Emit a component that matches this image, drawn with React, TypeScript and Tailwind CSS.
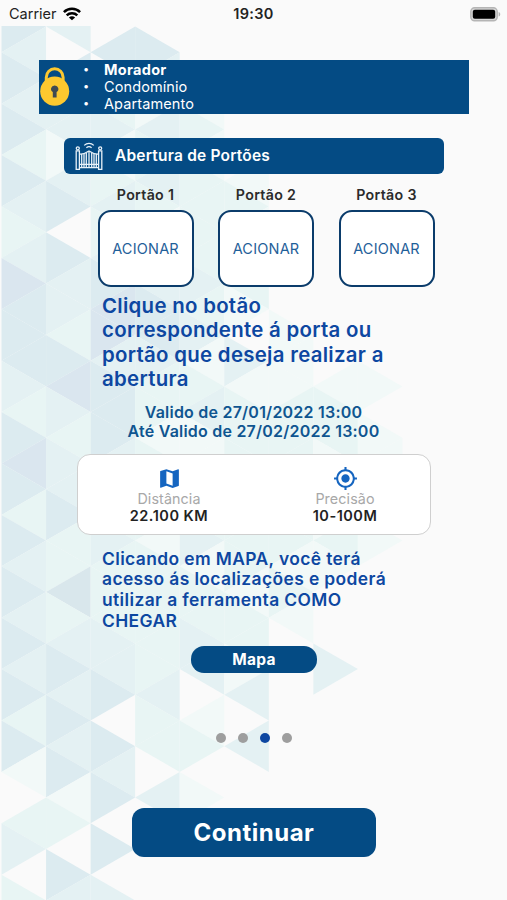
import { MdMap, MdMyLocation } from 'react-icons/md';

const COL_WIDTH = 44.55;
const HALF_ROW = 25.7;

const SHADES: Record<string, string> = {
  a: '#f2f9f8',
  b: '#e8f5f4',
  c: '#e4f1f3',
  d: '#dcebf0',
  e: '#d9e7ec',
  f: '#dae6ef',
};

// One string per column, one letter per triangle from top to bottom
const MOSAIC = [
  '.dcdcdbdcbcfdddcbdfdbdcdcdcdbda.bc.b',
  '.c.dccacd.dccbdfcbccdbbebcdcdcdab.dc',
  '..d.bcabcbcdffcdddcbbcbbbccd.dcd.d.c',
  '..dcacbcbaccddcbbabbbabbbbbcbb.c....',
  '....ababbbbcbcabcaabbcabbcc.ab.a....',
  '.......ababba.cabbbabbbabbac.c......',
  '.............aaabbbabbaba...........',
  '...............abbababa...c.........',
  '...............a.aa..a..............',
];

const gates = ['Portão 1', 'Portão 2', 'Portão 3'];
const pages = [0, 1, 2, 3];

function Background() {
  return (
    <svg className="absolute inset-0" width="507" height="900" viewBox="0 0 507 900">
      <defs>
        <clipPath id="below-status">
          <rect x="0" y="26" width="507" height="874" />
        </clipPath>
      </defs>
      <g clipPath="url(#below-status)">
        {MOSAIC.map((col, c) =>
          col.split('').map((shade, j) => {
            if (shade === '.') return null;
            const left = 1.5 + c * COL_WIDTH;
            const right = left + COL_WIDTH;
            const y = 0.9 + j * HALF_ROW;
            const pointsLeft = (c + j) % 2 === 0;
            const tip = pointsLeft ? left : right;
            const edge = pointsLeft ? right : left;
            return (
              <polygon
                key={`${c}-${j}`}
                points={`${tip},${y} ${edge},${y - HALF_ROW} ${edge},${y + HALF_ROW}`}
                fill={SHADES[shade]}
              />
            );
          })
        )}
      </g>
    </svg>
  );
}

function WifiIcon() {
  return (
    <svg width="18" height="14" viewBox="0 0 18 14" fill="none" stroke="#000" strokeWidth="2.5">
      <path d="M0.9 5.1C5.4 0.6 12.6 0.6 17.1 5.1" />
      <path d="M3.7 8.4C6.6 5.6 11.4 5.6 14.3 8.4" />
      <path d="M9 13.3L5.9 10.4C7.6 8.9 10.4 8.9 12.1 10.4Z" fill="#000" stroke="none" />
    </svg>
  );
}

function BatteryIcon() {
  return (
    <svg width="31" height="15" viewBox="0 0 31 15">
      <rect x="0.8" y="0.8" width="26.4" height="13" rx="3.8" fill="#d6d6d6" stroke="#b5b5b5" strokeWidth="1.4" />
      <rect x="2.8" y="2.8" width="22.4" height="9" rx="2" fill="#000" />
      <path d="M28.6 5C30.8 5.6 30.8 9 28.6 9.6Z" fill="#b5b5b5" />
    </svg>
  );
}

function LockIcon() {
  return (
    <svg width="31" height="40" viewBox="-0.7 0 31 40">
      <path d="M6.6 14V10.2a8.4 8.4 0 0 1 16.8 0V14" fill="none" stroke="#fdc82f" strokeWidth="3" />
      <ellipse cx="15" cy="24.2" rx="14.5" ry="14.6" fill="#fdc82f" />
      <path d="M15 18.4a3.6 3.6 0 0 1 1.9 6.7V30.6h-3.8v-5.5A3.6 3.6 0 0 1 15 18.4Z" fill="#404a52" />
    </svg>
  );
}

function GateIcon() {
  return (
    <svg width="28" height="29" viewBox="0 0 28 29" fill="none" stroke="#e8f1f8" strokeWidth="1.3">
      <path d="M9.2 3.4C12 0.7 16 0.7 18.8 3.4M11.4 5.8C13 4.3 15 4.3 16.6 5.8" />
      <circle cx="2.8" cy="6.3" r="1.5" />
      <circle cx="25.2" cy="6.3" r="1.5" />
      <path d="M1.2 8.8H4.4V27.4H1.2ZM23.6 8.8H26.8V27.4H23.6Z" />
      <path d="M4.4 12C8.5 12.5 10.5 11.4 14 9C17.5 11.4 19.5 12.5 23.6 12M4.4 22.3H23.6M4.4 25.6H23.6" />
      <path d="M6.7 12V25.6M9 12V25.6M11.3 11V25.6M14 9V25.6M16.7 11V25.6M19 12V25.6M21.3 12V25.6" />
    </svg>
  );
}

function StatusBar() {
  return (
    <div className="grid h-[26px] grid-cols-3 items-center pt-0.5 text-[14.5px] text-[#222]">
      <div className="flex items-center gap-[6px] pl-[9px]">
        <span>Carrier</span>
        <WifiIcon />
      </div>
      <span className="text-center font-semibold tracking-[0.3px]">19:30</span>
      <div className="flex justify-end pr-[6px]">
        <BatteryIcon />
      </div>
    </div>
  );
}

function Bullet() {
  return <span className="w-[21px] text-[11px]">•</span>;
}

function Metric({ icon, label, value }: { icon: React.ReactNode; label: string; value: string }) {
  return (
    <div className="flex w-[176px] shrink-0 flex-col items-center">
      <div className="h-[24px] text-[#1565c0]">{icon}</div>
      <span className="text-[14.3px] leading-[17px] tracking-[0.1px] text-[#a8a8a8]">{label}</span>
      <span className="text-[14.5px] font-semibold leading-[17px] tracking-[0.5px] text-[#222]">{value}</span>
    </div>
  );
}

export default function App() {
  return (
    <div className="relative h-[900px] w-[507px] overflow-hidden bg-[#fafafa] font-['Inter',sans-serif]">
      <Background />
      <div className="relative flex flex-col">
        <StatusBar />

        <header className="ml-[39px] mt-[33.5px] flex h-[54px] w-[430px] items-center bg-[#044b84] text-white">
          <LockIcon />
          <ul className="ml-[13px] text-[14.5px] leading-[17px] tracking-[0.1px]">
            <li className="flex"><Bullet /><b className="tracking-[0.3px]">Morador</b></li>
            <li className="flex"><Bullet />Condomínio</li>
            <li className="flex"><Bullet />Apartamento</li>
          </ul>
        </header>

        <div className="ml-[64px] mt-[24.5px] flex h-[36px] w-[380px] items-center gap-[12px] rounded-[6px] bg-[#044b84] pl-[11px] text-white">
          <GateIcon />
          <h1 className="text-[15.5px] font-semibold tracking-[0.2px]">Abertura de Portões</h1>
        </div>

        <div className="ml-[97.5px] mt-[12px] flex gap-[24.5px]">
          {gates.map((gate) => (
            <div key={gate} className="flex w-[96px] flex-col items-center">
              <span className="text-[14.2px] font-semibold leading-[18px] tracking-[0.3px] text-[#2b2b2b]">{gate}</span>
              <button className="mt-[6px] h-[77px] w-[96px] rounded-[13px] border-2 border-[#0b3c6b] bg-white text-[14.5px] tracking-[0.2px] text-[#1f6099]">
                ACIONAR
              </button>
            </div>
          ))}
        </div>

        <p className="ml-[102px] mt-[7px] w-[300px] text-[20.4px] font-semibold leading-[24.4px] tracking-[0.3px] text-[#0d47a1]">
          Clique no botão
          <br />
          correspondente á porta ou
          <br />
          portão que deseja realizar a
          <br />
          abertura
        </p>

        <p className="mt-[11px] text-center text-[16px] font-semibold leading-[19.5px] tracking-[0.22px] text-[#0f5590]">
          Valido de 27/01/2022 13:00
          <br />
          Até Valido de 27/02/2022 13:00
        </p>

        <section className="ml-[77px] mt-[12px] flex h-[81px] w-[354px] rounded-[13px] border border-[#cfcfcf] bg-white pl-[3px] pt-[11px]">
          <Metric icon={<MdMap size={25} />} label="Distância" value="22.100 KM" />
          <Metric icon={<MdMyLocation size={25} />} label="Precisão" value="10-100M" />
        </section>

        <p className="ml-[102px] mt-[14px] w-[310px] text-[17.4px] font-semibold leading-[20.7px] tracking-[0.4px] text-[#0d47a1]">
          Clicando em MAPA, você terá
          <br />
          acesso ás localizações e poderá
          <br />
          utilizar a ferramenta COMO
          <br />
          CHEGAR
        </p>

        <button className="ml-[191px] mt-[15px] h-[27px] w-[126px] rounded-[13px] bg-[#044b84] text-[15.5px] font-bold tracking-[0.3px] text-white">
          Mapa
        </button>

        <div className="ml-[216px] mt-[60px] flex gap-[12px]">
          {pages.map((page) => (
            <span
              key={page}
              className={`h-[10px] w-[10px] rounded-full ${page === 2 ? 'bg-[#0d47a1]' : 'bg-[#9e9e9e]'}`}
            />
          ))}
        </div>

        <button className="ml-[132px] mt-[65px] h-[49px] w-[244px] rounded-[12px] bg-[#044b84] text-[24px] font-bold tracking-[0.5px] text-white">
          Continuar
        </button>
      </div>
    </div>
  );
}
